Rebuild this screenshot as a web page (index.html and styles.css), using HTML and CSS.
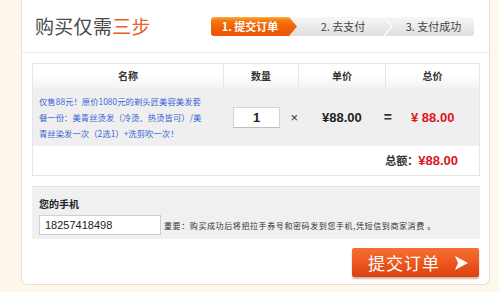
FILE: index.html
```html
<!DOCTYPE html>
<html lang="zh-CN">
<head>
<meta charset="utf-8">
<title>购买仅需三步</title>
<link rel="stylesheet" href="styles.css">
</head>
<body>
<div class="panel">
  <div class="head">
    <h1 class="title">购买仅需<span class="hl">三步</span></h1>
    <div class="steps">
      <div class="step step-on">1. 提交订单</div>
      <div class="step step-2">2. 去支付</div>
      <div class="step step-3">3. 支付成功</div>
    </div>
  </div>

  <div class="order">
    <div class="row row-head">
      <div class="cell c-name">名称</div>
      <div class="cell c-qty">数量</div>
      <div class="cell c-price">单价</div>
      <div class="cell c-total">总价</div>
    </div>
    <div class="row row-item">
      <div class="cell c-name desc">仅售88元！原价1080元的剃头匠美容美发套<br>餐一份：美青丝烫发（冷烫、热烫皆可）/美<br>青丝染发一次（2选1）+洗剪吹一次！</div>
      <div class="cell c-qty"><span class="qty-box">1</span><span class="op">×</span></div>
      <div class="cell c-price"><span class="price">¥88.00</span><span class="op eq">=</span></div>
      <div class="cell c-total"><span class="red">¥ 88.00</span></div>
    </div>
    <div class="row-sum">总额：<span class="red sum">¥88.00</span></div>
  </div>

  <div class="phone">
    <div class="phone-label">您的手机</div>
    <div class="phone-line">
      <span class="phone-input">18257418498</span>
      <span class="note">重要：购买成功后将把拉手券号和密码发到您手机,凭短信到商家消费 。</span>
    </div>
  </div>

  <div class="actions">
    <button class="submit">提交订单<svg class="arrow" width="16" height="16" viewBox="0 0 16 16"><path d="M2 1 L15 8 L2 15 L5 8 Z" fill="#fff"/></svg></button>
  </div>
</div>
</body>
</html>
```

FILE: styles.css
```css
html, body {
  margin: 0;
  padding: 0;
  background: #fef7ed;
  font-family: "Noto Sans CJK SC", "Liberation Sans", sans-serif;
}

.panel {
  margin-left: 21px;
  width: 467px;
  background: #fff;
  border: 1px solid #f3dccb;
  border-top: none;
  border-radius: 0 0 6px 6px;
  padding-bottom: 7px;
}

.head {
  height: 52px;
  border-bottom: 1px solid #f8e6d8;
  display: flex;
  align-items: center;
  justify-content: space-between;
  padding: 0 15px 0 13px;
}

.title {
  margin: 0;
  font-size: 19px;
  font-weight: normal;
  color: #4a4a4a;
  letter-spacing: 0.3px;
  line-height: 1;
  margin-top: -1px;
}
.title .hl { color: #e8612c; }

.steps {
  width: 263px;
  height: 19px;
  display: flex;
  border-radius: 3px;
  background: linear-gradient(#f7f7f7, #dedede);
  position: relative;
  margin-top: 1px;
  overflow: hidden;
}

.step {
  font-size: 11px;
  line-height: 19px;
  color: #444;
  text-align: center;
  white-space: nowrap;
}

.step-on {
  width: 86px;
  padding-right: 8px;
  box-sizing: border-box;
  color: #fff;
  font-weight: bold;
  background: linear-gradient(#fbb03b 0, #f57a12 18%, #f06006 55%, #ee5503 100%);
  clip-path: polygon(0 0, calc(100% - 8px) 0, 100% 50%, calc(100% - 8px) 100%, 0 100%);
}

.step-2 {
  width: 88px;
  padding-left: 4px;
  box-sizing: border-box;
  position: relative;
}
.step-2::after {
  content: "";
  position: absolute;
  right: -8px;
  top: 0;
  width: 10px;
  height: 19px;
  background: #fbfbfb;
  clip-path: polygon(0 0, 2px 0, 10px 50%, 2px 100%, 0 100%, 8px 50%);
}

.step-3 {
  flex: 1;
  padding-left: 8px;
}

.order {
  margin: 10px 0 0 10px;
  width: 446px;
  border: 1px solid #e6e6e6;
}

.row {
  display: grid;
  grid-template-columns: 190px 75px 87px 94px;
}

.row-head {
  height: 24px;
  background: linear-gradient(#ffffff 0, #ffffff 45%, #f2f2f2 100%);
}
.row-head .cell {
  font-size: 10px;
  font-weight: bold;
  color: #333;
  text-align: center;
  line-height: 24px;
  border-left: 1px solid #e6e6e6;
}
.row-head .cell:first-child { border-left: none; }

.row-item {
  height: 58px;
  background: #efefef;
  align-items: center;
}

.desc {
  padding: 0 0 0 6px;
  font-size: 8.4px;
  line-height: 16px;
  color: #3a66d6;
  white-space: nowrap;
}

.row-item .c-qty,
.row-item .c-price,
.row-item .c-total {
  display: flex;
  align-items: center;
  font-family: "Liberation Sans", Arial, sans-serif;
}

.qty-box {
  display: inline-block;
  box-sizing: border-box;
  width: 55px;
  height: 21px;
  margin-left: 10px;
  background: #fff;
  border: 1px solid #d4d4d4;
  border-bottom-color: #bdbdbd;
  text-align: center;
  font-weight: bold;
  font-size: 13px;
  line-height: 19px;
  color: #222;
}

.op {
  font-size: 13px;
  color: #333;
  margin-left: 10px;
}

.price {
  margin-left: 24px;
  font-weight: bold;
  font-size: 13px;
  color: #222;
}
.eq {
  margin-left: 22px;
  font-size: 14px;
  font-weight: bold;
}

.c-total .red {
  margin-left: 26px;
  font-size: 13px;
  font-weight: bold;
}

.red { color: #e0141e; }

.row-sum {
  height: 29px;
  line-height: 29px;
  background: #fff;
  text-align: right;
  padding-right: 21px;
  font-size: 11px;
  font-weight: bold;
  color: #333;
}
.sum {
  font-family: "Liberation Sans", Arial, sans-serif;
  font-size: 13px;
}

.phone {
  margin: 10px 0 0 10px;
  width: 448px;
  height: 53px;
  box-sizing: border-box;
  background: #f0f0f0;
  border-top: 1px solid #e4e4e4;
  padding: 10px 0 0 7px;
}

.phone-label {
  font-size: 10px;
  font-weight: bold;
  color: #222;
  line-height: 14px;
}

.phone-line {
  display: flex;
  align-items: center;
  margin-top: 4px;
}

.phone-input {
  display: inline-block;
  box-sizing: border-box;
  width: 122px;
  height: 20px;
  background: #fff;
  border: 1px solid #cfcfcf;
  font-family: "Liberation Sans", Arial, sans-serif;
  font-size: 11px;
  line-height: 18px;
  padding-left: 5px;
  color: #222;
}

.note {
  margin-left: 3px;
  font-size: 8px;
  letter-spacing: 0.6px;
  color: #333;
  white-space: nowrap;
}

.actions {
  display: flex;
  justify-content: flex-end;
  padding: 9px 10px 0 0;
}

.submit {
  width: 127px;
  height: 29px;
  border: none;
  border-radius: 2px;
  background: linear-gradient(#f66f33 0, #ef5a22 45%, #d7410f 100%);
  box-shadow: 0 2px 2px rgba(120, 40, 0, 0.35);
  color: #fff;
  font-family: "Noto Sans CJK SC", sans-serif;
  font-size: 17px;
  letter-spacing: 1px;
  display: flex;
  align-items: center;
  justify-content: center;
  padding: 0 0 0 6px;
  gap: 13px;
}

.arrow { display: block; }
```
